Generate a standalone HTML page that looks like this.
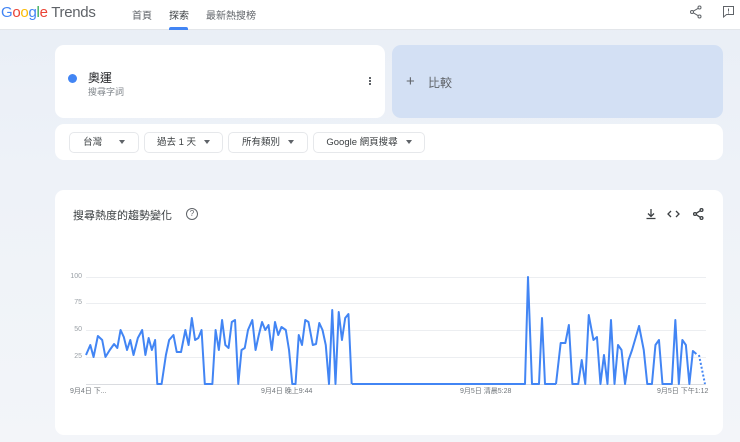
<!DOCTYPE html>
<html><head><meta charset="utf-8"><style>
*{margin:0;padding:0;box-sizing:border-box}
body{width:740px;height:442px;overflow:hidden;background:linear-gradient(#e9eef6 0,#eef2f8 180px,#f3f5f9 442px);font-family:"Liberation Sans","Noto Sans CJK TC",sans-serif;position:relative;color:#3c4043}
.hdr{position:absolute;left:0;top:0;width:740px;height:30px;background:#fff;border-bottom:1px solid #e3e6ea}
.logo{position:absolute;left:1px;top:4px;font-size:15px;letter-spacing:-0.3px}
.nav{position:absolute;top:7px;font-size:10px;color:#5f6368}
.card{position:absolute;background:#fff;border-radius:9px}
.chip{position:absolute;top:132px;height:21px;border:1px solid #e6e8eb;border-radius:5px;font-size:9.5px;color:#3c4043;line-height:19px;text-align:center}
.tri{display:inline-block;width:0;height:0;border-left:3.5px solid transparent;border-right:3.5px solid transparent;border-top:4px solid #5f6368;vertical-align:middle;margin-left:8px}
.yl{position:absolute;left:60px;font-size:7px;color:#9aa0a6;width:22px;text-align:right}
.xl{position:absolute;top:386px;font-size:7px;color:#70757a}
</style></head><body>
<div class="hdr">
<div class="logo"><span style="color:#4285f4">G</span><span style="color:#ea4335">o</span><span style="color:#fbbc05">o</span><span style="color:#4285f4">g</span><span style="color:#34a853">l</span><span style="color:#ea4335">e</span><span style="color:#5f6368"> Trends</span></div>
<div class="nav" style="left:132px">首頁</div>
<div class="nav" style="left:169px;color:#3c4043">探索</div>
<div style="position:absolute;left:169px;top:27px;width:19px;height:3px;background:#4285f4;border-radius:2px 2px 0 0"></div>
<div class="nav" style="left:206px">最新熱搜榜</div>
<svg style="position:absolute;left:689px;top:5px" width="14" height="14" viewBox="0 0 14 14" fill="none" stroke="#5f6368" stroke-width="1"><circle cx="10.5" cy="2.5" r="1.5"/><circle cx="3" cy="7" r="1.5"/><circle cx="10.5" cy="11.5" r="1.5"/><path d="M4.3 6.2L9.2 3.3M4.3 7.8L9.2 10.7"/></svg>
<svg style="position:absolute;left:722px;top:5px" width="13" height="13" viewBox="0 0 13 13" fill="none" stroke="#5f6368" stroke-width="1"><path d="M1.5 1.5h10v8h-7l-3 2.5z"/><path d="M6.5 3.5v3M6.5 7.5v1"/></svg>
</div>
<div class="card" style="left:55px;top:45px;width:330px;height:73px">
<div style="position:absolute;left:13px;top:29px;width:9px;height:9px;border-radius:50%;background:#4285f4"></div>
<div style="position:absolute;left:33px;top:24px;font-size:12px;color:#202124">奧運</div>
<div style="position:absolute;left:33px;top:40px;font-size:9px;color:#80868b">搜尋字詞</div>
<div style="position:absolute;left:314px;top:32px;width:2px;height:2px;background:#5f6368;box-shadow:0 3px #5f6368,0 6px #5f6368"></div>
</div>
<div class="card" style="left:392px;top:45px;width:331px;height:73px;background:#d3e0f4">
<div style="position:absolute;left:14px;top:29px;font-size:15px;color:#5f6368;line-height:15px">+</div>
<div style="position:absolute;left:36px;top:29px;font-size:12px;color:#5f6368">比較</div>
</div>
<div class="card" style="left:55px;top:124px;width:668px;height:36px"></div>
<div class="chip" style="left:69px;width:70px">台灣 <span class="tri" style="margin-left:14px"></span></div>
<div class="chip" style="left:144px;width:79px">過去 1 天<span class="tri"></span></div>
<div class="chip" style="left:228px;width:80px">所有類別<span class="tri"></span></div>
<div class="chip" style="left:313px;width:112px">Google 網頁搜尋<span class="tri"></span></div>
<div class="card" style="left:55px;top:190px;width:668px;height:245px"></div>
<div style="position:absolute;left:73px;top:207px;font-size:11px;color:#3c4043">搜尋熱度的趨勢變化</div>
<div style="position:absolute;left:186px;top:208px;width:12px;height:12px;border:1px solid #5f6368;border-radius:50%;font-size:8px;line-height:10px;text-align:center;color:#5f6368">?</div>
<svg style="position:absolute;left:644px;top:207px" width="62" height="14" viewBox="0 0 62 14" fill="none" stroke="#3c4043" stroke-width="1.3"><path d="M7 2v7M4 6.5l3 3 3-3M2.5 11.5h9"/><path d="M27 4l-3 3 3 3M32 4l3 3-3 3"/><circle cx="57.5" cy="3" r="1.4"/><circle cx="51" cy="7" r="1.4"/><circle cx="57.5" cy="11" r="1.4"/><path d="M52.2 6.3l4.1-2.6M52.2 7.7l4.1 2.6"/></svg>
<svg style="position:absolute;left:0;top:0" width="740" height="442">
<g stroke="#eceef1" stroke-width="1"><path d="M86 277.5H706M86 303.5H706M86 330.5H706M86 357.5H706"/></g>
<path d="M86 384.5H706" stroke="#dadce0"/>
<g fill="none" stroke="#4285f4" stroke-width="2" stroke-linejoin="round">
<polyline vector-effect="non-scaling-stroke" transform="translate(86,0) scale(1.08,1) translate(-86,0)" points="86,355 90,345 93,357 97,336 101,340 104,357 108,350 112,344 115,348 118,330 121,337 124,350 127,340 130,355 134,338 138,330 141,355 144,338 147,350 150,340 152,384 156,384 160,355 163,340 167,335 170,352 174,352 178,330 181,345 184,318 187,340 190,338 193,330 196,384 203,384 206,330 209,350 212,320 215,345 218,348 221,322 224,320 227,384 230,350 233,348 236,330 240,320 243,350 246,335 249,322 252,330 255,325 258,350 261,322 264,335 267,327 271,330 274,350 277,384 280,384 283,335 286,345 289,320 292,322 296,345 299,344 302,323 305,330 308,345 311,384 314,310 317,384 320,312 323,340 326,318 329,314 332,384"/>
<polyline points="352,384 525,384 528,277 532,384 539,384 542,318 545,384 556,384"/>
<polyline vector-effect="non-scaling-stroke" transform="translate(556,0) scale(1.17,1) translate(-556,0)" points="556,384 560,343 564,343 567,325 570,384 575,384 578,360 581,384 584,315 588,340 591,337 594,384 597,355 600,384 603,320 606,384 609,345 612,350 615,384 618,360 621,350 624,338 627,326 631,350 634,384 638,384 641,345 644,340 647,384 655,384 658,320 661,384 664,340 667,345 670,384 673,351 676,354"/>
</g>
<path d="M699 355L705 384" stroke="#4285f4" stroke-width="2" stroke-dasharray="2,2" fill="none"/>
</svg>
<div class="yl" style="top:273px">100</div>
<div class="yl" style="top:299px">75</div>
<div class="yl" style="top:326px">50</div>
<div class="yl" style="top:353px">25</div>
<div class="xl" style="left:70px">9月4日 下...</div>
<div class="xl" style="left:261px">9月4日 晚上9:44</div>
<div class="xl" style="left:460px">9月5日 清晨5:28</div>
<div class="xl" style="left:657px">9月5日 下午1:12</div>
</body></html>
